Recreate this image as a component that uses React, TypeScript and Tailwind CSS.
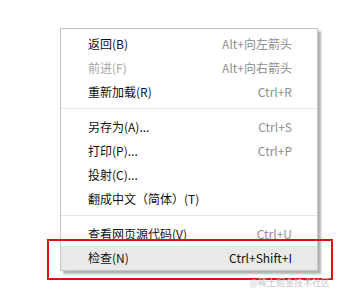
const font = { fontFamily: '"Microsoft YaHei", "Noto Sans CJK SC", "Noto Sans", sans-serif' }

type Item = { label: string; shortcut?: string; disabled?: boolean; active?: boolean }

const groups: Item[][] = [
  [
    { label: "返回(B)", shortcut: "Alt+向左箭头" },
    { label: "前进(F)", shortcut: "Alt+向右箭头", disabled: true },
    { label: "重新加载(R)", shortcut: "Ctrl+R" },
  ],
  [
    { label: "另存为(A)...", shortcut: "Ctrl+S" },
    { label: "打印(P)...", shortcut: "Ctrl+P" },
    { label: "投射(C)..." },
    { label: "翻成中文（简体）(T)" },
  ],
  [
    { label: "查看网页源代码(V)", shortcut: "Ctrl+U" },
    { label: "检查(N)", shortcut: "Ctrl+Shift+I", active: true },
  ],
]

function Row({ item }: { item: Item }) {
  return (
    <div
      className={
        "flex h-[24px] items-center justify-between pl-[27px] pr-[25px] text-[12px] " +
        (item.active ? "bg-[#e9e9e9]" : "")
      }
    >
      <span className={item.disabled ? "text-[#a6a6a6]" : "text-[#111]"}>{item.label}</span>
      {item.shortcut && (
        <span className={item.active ? "text-[#111]" : "text-[#8e8e8e]"}>{item.shortcut}</span>
      )}
    </div>
  )
}

export default function App() {
  return (
    <div className="relative h-[296px] w-[340px] overflow-hidden bg-white" style={font}>
      <div className="ml-[60px] mt-[28px] w-[258px] border border-[#c4c4c4] bg-white pt-[3px] shadow-[3px_3px_2px_rgba(0,0,0,0.3)]">
        {groups.map((g, i) => (
          <div key={i}>
            {i > 0 && (
              <div className="pb-[6px] pt-[4px]">
                <div className="h-px bg-[#e3e3e3]" />
              </div>
            )}
            {g.map((item) => (
              <Row key={item.label} item={item} />
            ))}
          </div>
        ))}
      </div>

      {/* annotation box */}
      <div className="absolute left-[47px] top-[239px] h-[41px] w-[286px] border-2 border-[#e01010]" />

      <div className="absolute right-[10px] top-[276px] text-[9px] text-[#c8c8c8]">@稀土掘金技术社区</div>
    </div>
  )
}
